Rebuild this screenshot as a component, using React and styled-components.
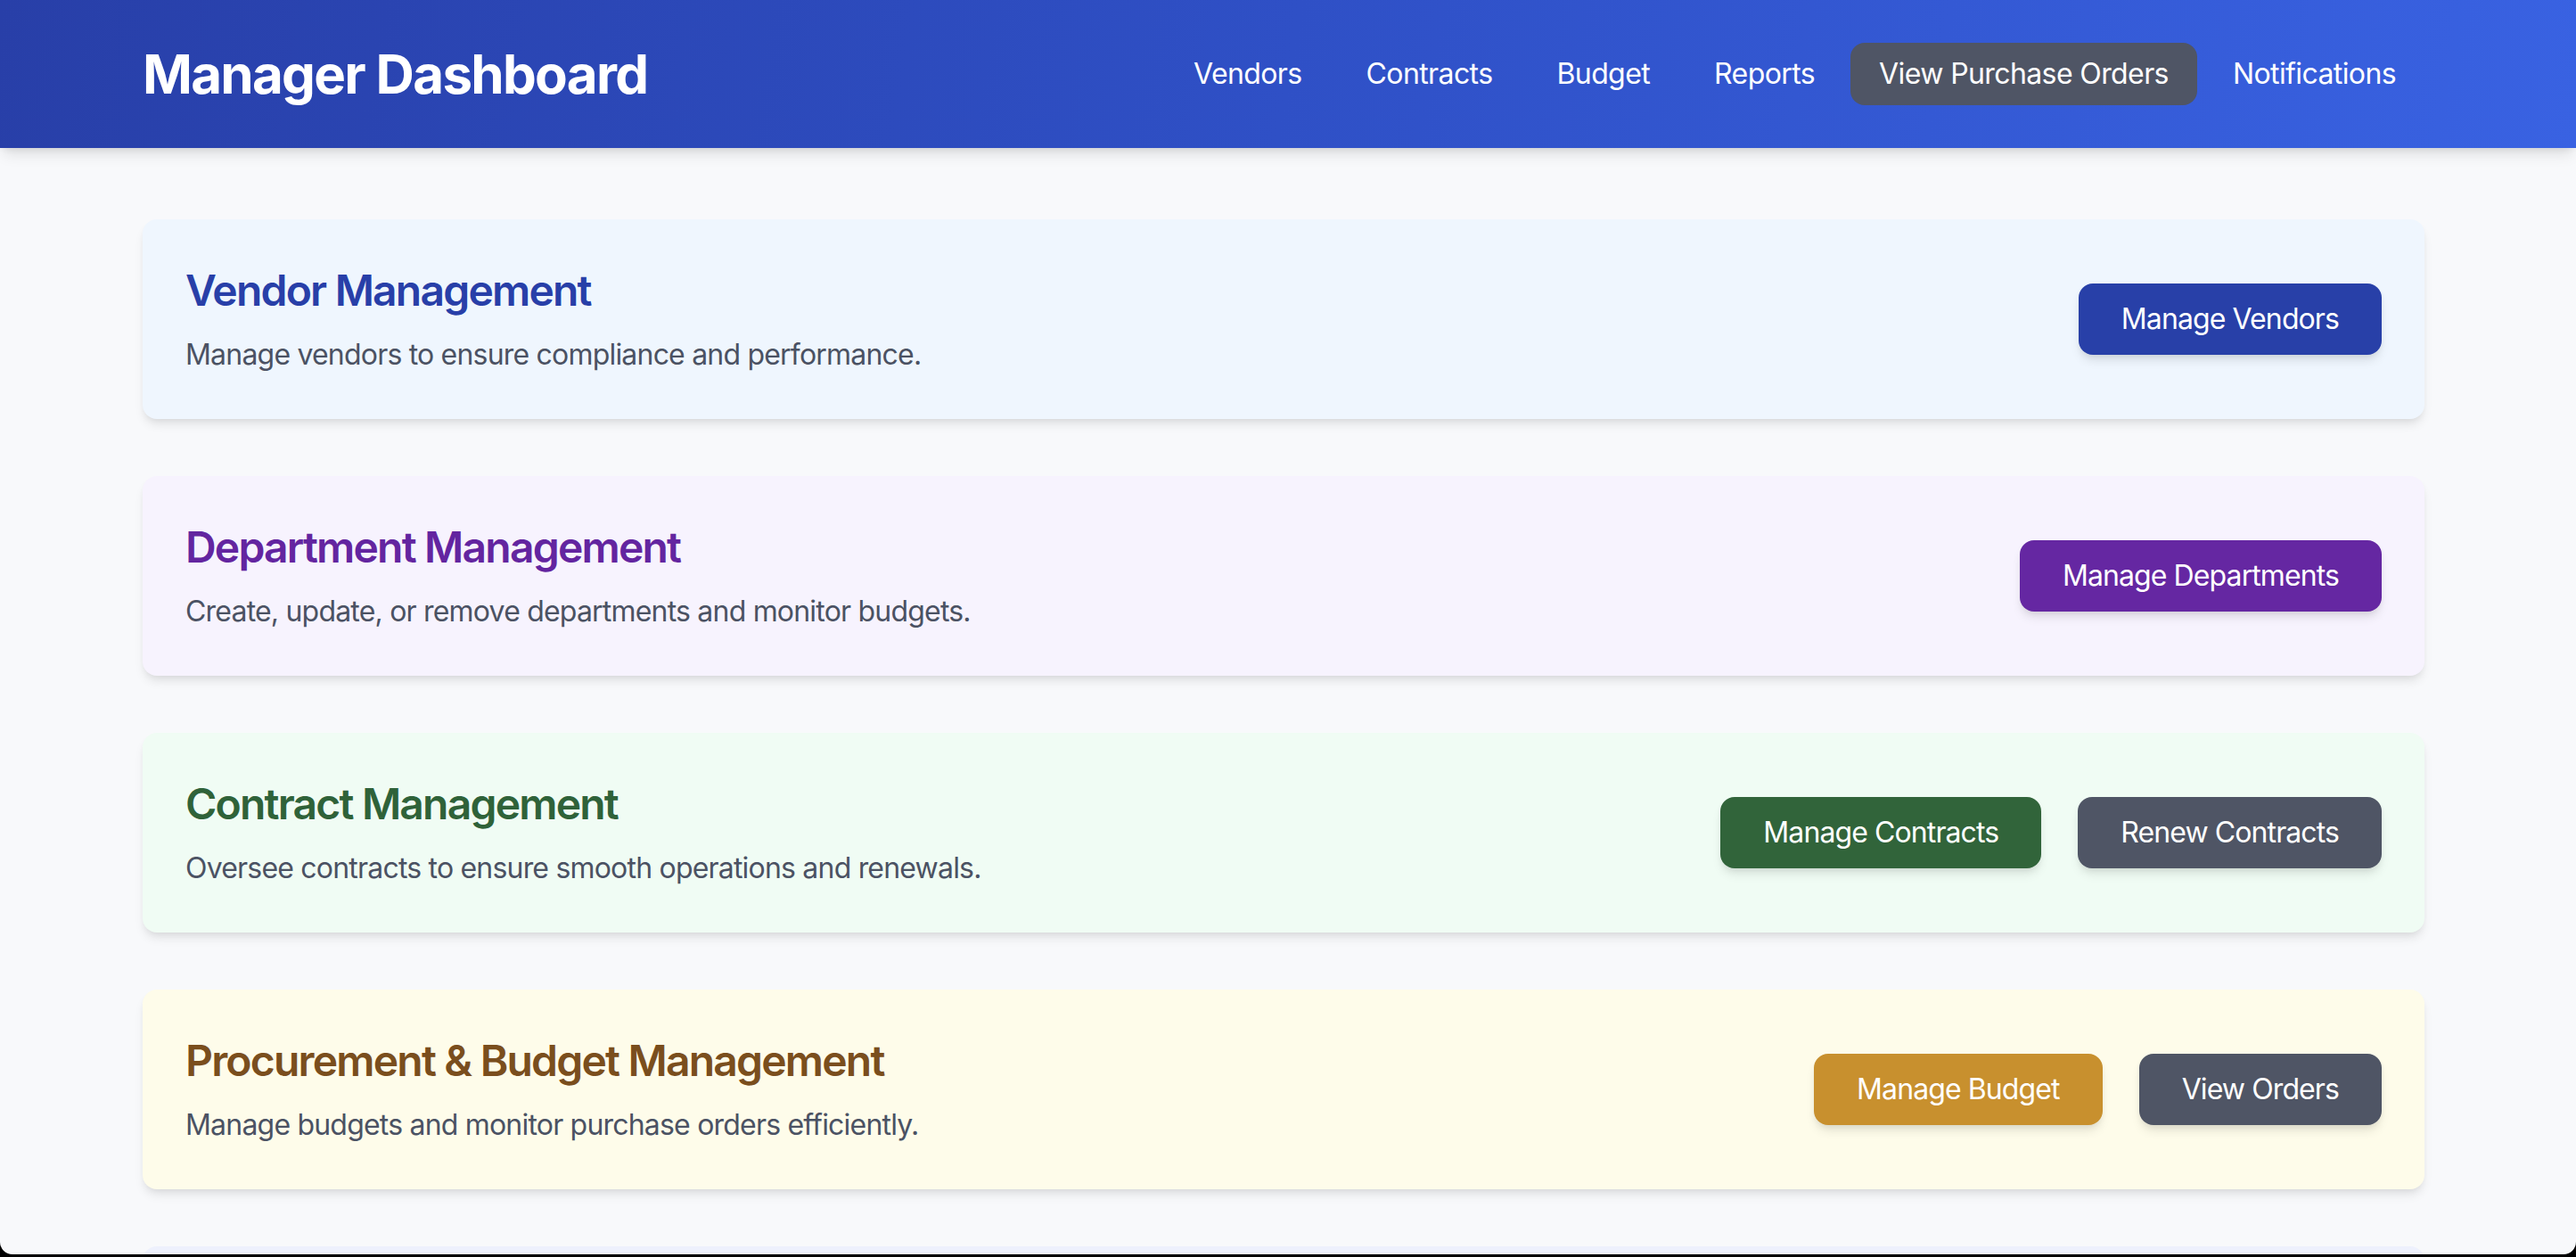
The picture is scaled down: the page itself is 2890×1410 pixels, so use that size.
import React from 'react';
import styled, { createGlobalStyle } from 'styled-components';

const GlobalStyle = createGlobalStyle`
	html, body {
		margin: 0;
		padding: 0;
		background: #000;
		font-family: Inter, "Noto Sans", "Liberation Sans", sans-serif;
	}
	* {
		box-sizing: border-box;
	}
`;

const Frame = styled.div`
	height: 1407px;
	overflow: hidden;
	background: #f8f9fb;
	border-bottom-left-radius: 14px;
	border-bottom-right-radius: 14px;
`;

const Header = styled.header`
	height: 166px;
	background: linear-gradient(100deg, #283fa8 0%, #2f50c6 50%, #3962e2 100%);
	box-shadow: 0 10px 16px -4px rgba(0, 0, 0, 0.12), 0 4px 8px -4px rgba(0, 0, 0, 0.1);
	position: relative;
	z-index: 1;
`;

const HeaderInner = styled.div`
	width: 2560px;
	margin-left: 160px;
	height: 100%;
	display: flex;
	align-items: center;
	justify-content: space-between;
`;

const Brand = styled.h1`
	margin: 0;
	font-size: 60px;
	line-height: 72px;
	font-weight: 700;
	color: #fff;
	letter-spacing: -1.7px;
`;

const Nav = styled.nav`
	display: flex;
	align-items: center;
	gap: 8px;
`;

const NavItem = styled.a`
	display: block;
	padding: 11px 32px;
	border-radius: 16px;
	font-size: 32px;
	line-height: 48px;
	letter-spacing: -0.6px;
	color: #fff;
	text-decoration: none;
	background: ${({ $active }) => ($active ? '#4f5565' : 'transparent')};
`;

const Main = styled.main`
	width: 2560px;
	margin-left: 160px;
	padding: 80px 0;
	display: flex;
	flex-direction: column;
	gap: 64px;
`;

const Card = styled.section`
	display: flex;
	align-items: center;
	justify-content: space-between;
	min-height: 224px;
	padding: 48px;
	border-radius: 16px;
	background: ${({ $bg }) => $bg};
	box-shadow: 0 8px 12px -2px rgba(0, 0, 0, 0.09), 0 4px 8px -4px rgba(0, 0, 0, 0.08);
`;

const CardText = styled.div`
	display: flex;
	flex-direction: column;
`;

const CardTitle = styled.h2`
	margin: 0 0 16px;
	font-size: 48px;
	line-height: 64px;
	font-weight: 600;
	color: ${({ $color }) => $color};
	letter-spacing: -1.8px;
`;

const CardDesc = styled.p`
	margin: 0;
	font-size: 32px;
	line-height: 48px;
	letter-spacing: -0.8px;
	color: #4b5263;
`;

const Actions = styled.div`
	display: flex;
	gap: 41px;
`;

const Button = styled.button`
	border: none;
	padding: 16px 48px;
	border-radius: 16px;
	font-family: inherit;
	font-size: 32px;
	line-height: 48px;
	letter-spacing: -0.9px;
	color: #fff;
	background: ${({ $bg }) => $bg};
	box-shadow: 0 8px 12px -2px rgba(0, 0, 0, 0.1), 0 4px 8px -4px rgba(0, 0, 0, 0.1);
	cursor: pointer;
`;

const navLinks = ['Vendors', 'Contracts', 'Budget', 'Reports', 'View Purchase Orders', 'Notifications'];

const sections = [
	{
		title: 'Vendor Management',
		desc: 'Manage vendors to ensure compliance and performance.',
		bg: '#eff6fe',
		color: '#283fa8',
		buttons: [{ label: 'Manage Vendors', bg: '#2840a8' }],
	},
	{
		title: 'Department Management',
		desc: 'Create, update, or remove departments and monitor budgets.',
		bg: '#f7f3fe',
		color: '#6325a0',
		buttons: [{ label: 'Manage Departments', bg: '#6527a2' }],
	},
	{
		title: 'Contract Management',
		desc: 'Oversee contracts to ensure smooth operations and renewals.',
		bg: '#f0fcf4',
		color: '#2f6239',
		buttons: [
			{ label: 'Manage Contracts', bg: '#31643a' },
			{ label: 'Renew Contracts', bg: '#4f5565' },
		],
	},
	{
		title: 'Procurement & Budget Management',
		desc: 'Manage budgets and monitor purchase orders efficiently.',
		bg: '#fefcea',
		color: '#7a4e1d',
		buttons: [
			{ label: 'Manage Budget', bg: '#c8902e' },
			{ label: 'View Orders', bg: '#4f5565' },
		],
	},
];

const App = () => (
	<Frame>
		<GlobalStyle />
		<Header>
			<HeaderInner>
				<Brand>Manager Dashboard</Brand>
				<Nav>
					{navLinks.map((link) => (
						<NavItem key={link} href="#" $active={link === 'View Purchase Orders'}>
							{link}
						</NavItem>
					))}
				</Nav>
			</HeaderInner>
		</Header>
		<Main>
			{sections.map((s) => (
				<Card key={s.title} $bg={s.bg}>
					<CardText>
						<CardTitle $color={s.color}>{s.title}</CardTitle>
						<CardDesc>{s.desc}</CardDesc>
					</CardText>
					<Actions>
						{s.buttons.map((b) => (
							<Button key={b.label} $bg={b.bg}>
								{b.label}
							</Button>
						))}
					</Actions>
				</Card>
			))}
			{/* next section, only its top edge is in view */}
			<Card $bg="#eef1fd" />
		</Main>
	</Frame>
);

export default App;
